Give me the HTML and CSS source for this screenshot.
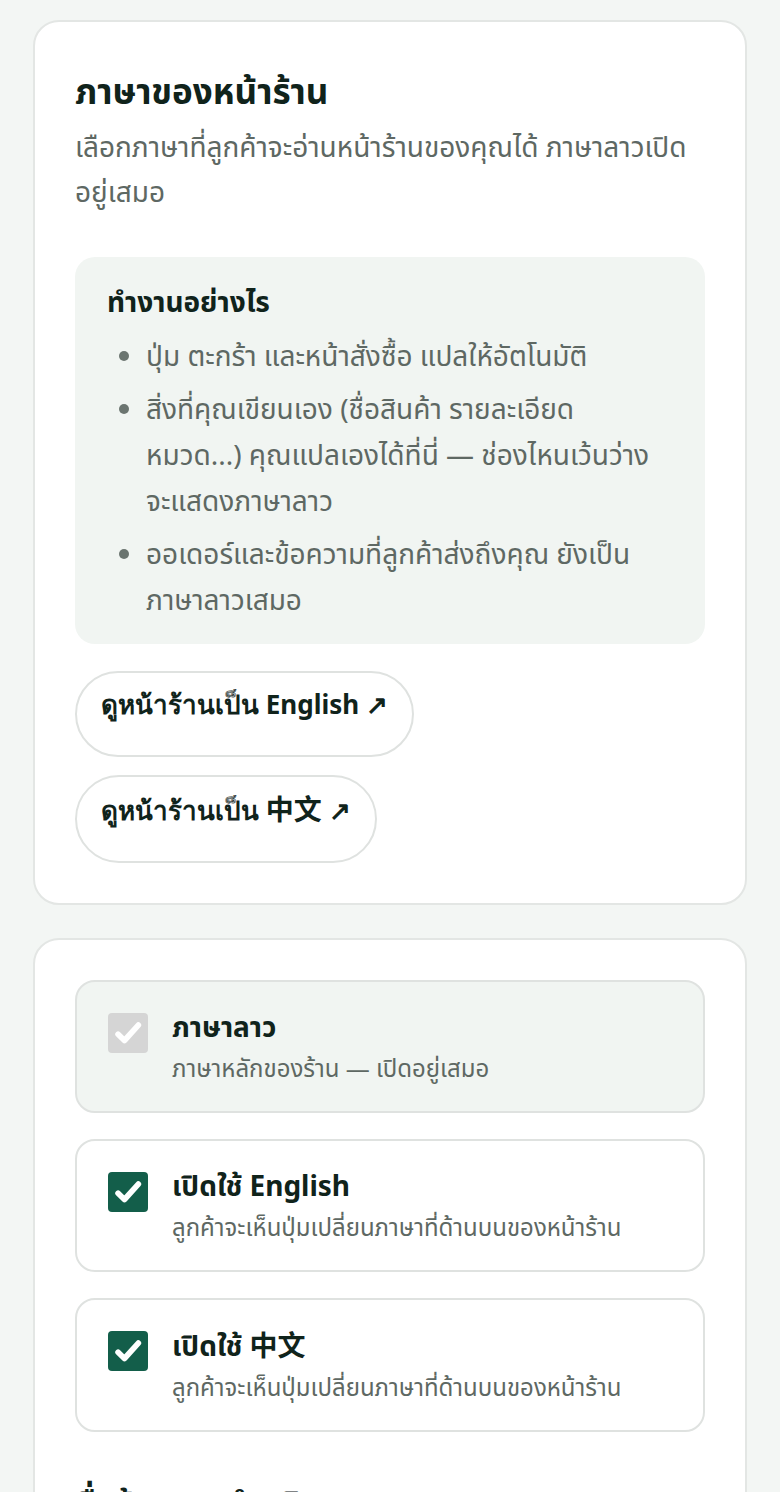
FILE: index.html
```html
<!DOCTYPE html>
<html lang="th">
<head>
<meta charset="utf-8">
<title>ภาษาของหน้าร้าน</title>
<link rel="stylesheet" href="styles.css">
</head>
<body>
<main class="page">
  <section class="card card-intro">
    <h1 class="card-title">ภาษาของหน้าร้าน</h1>
    <p class="card-desc">เลือกภาษาที่ลูกค้าจะอ่านหน้าร้านของคุณได้ ภาษาลาวเปิดอยู่เสมอ</p>
    <div class="info">
      <h2 class="info-title">ทำงานอย่างไร</h2>
      <ul class="info-list">
        <li>ปุ่ม ตะกร้า และหน้าสั่งซื้อ แปลให้อัตโนมัติ</li>
        <li>สิ่งที่คุณเขียนเอง (ชื่อสินค้า รายละเอียด หมวด...) คุณแปลเองได้ที่นี่ — ช่องไหนเว้นว่างจะแสดงภาษาลาว</li>
        <li>ออเดอร์และข้อความที่ลูกค้าส่งถึงคุณ ยังเป็นภาษาลาวเสมอ</li>
      </ul>
    </div>
    <div class="links">
      <a class="pill" href="#">ดูหน้าร้านเป็น English ↗</a>
      <a class="pill" href="#">ดูหน้าร้านเป็น <span class="cjk">中文</span> ↗</a>
    </div>
  </section>

  <section class="card card-options">
    <div class="options">
      <label class="option option-locked">
        <span class="check check-disabled">
          <svg viewBox="0 0 24 24" width="34" height="34"><path d="M5 12.8l4.5 4.5L19.3 6.4" fill="none" stroke="#fff" stroke-width="4" stroke-linecap="round" stroke-linejoin="round"/></svg>
        </span>
        <span class="option-text">
          <span class="option-title">ภาษาลาว</span>
          <span class="option-sub">ภาษาหลักของร้าน — เปิดอยู่เสมอ</span>
        </span>
      </label>
      <label class="option">
        <span class="check">
          <svg viewBox="0 0 24 24" width="34" height="34"><path d="M5 12.8l4.5 4.5L19.3 6.4" fill="none" stroke="#fff" stroke-width="4" stroke-linecap="round" stroke-linejoin="round"/></svg>
        </span>
        <span class="option-text">
          <span class="option-title">เปิดใช้ English</span>
          <span class="option-sub">ลูกค้าจะเห็นปุ่มเปลี่ยนภาษาที่ด้านบนของหน้าร้าน</span>
        </span>
      </label>
      <label class="option">
        <span class="check">
          <svg viewBox="0 0 24 24" width="34" height="34"><path d="M5 12.8l4.5 4.5L19.3 6.4" fill="none" stroke="#fff" stroke-width="4" stroke-linecap="round" stroke-linejoin="round"/></svg>
        </span>
        <span class="option-text">
          <span class="option-title">เปิดใช้ <span class="cjk">中文</span></span>
          <span class="option-sub">ลูกค้าจะเห็นปุ่มเปลี่ยนภาษาที่ด้านบนของหน้าร้าน</span>
        </span>
      </label>
    </div>
    <h2 class="section-title">ชื่อร้านและคำอธิบาย</h2>
  </section>
</main>
</body>
</html>
```
FILE: styles.css
```css
* { box-sizing: border-box; }
html, body { margin: 0; padding: 0; }
body {
  background: #f3f6f4;
  font-family: "Noto Sans", "Noto Sans Thai", "Noto Sans CJK SC", sans-serif;
  color: #10231b;
}
.page {
  padding: 20px 33px 40px;
  display: flex;
  flex-direction: column;
  gap: 33px;
}
.card {
  background: #fff;
  border: 2px solid #e3e6e4;
  border-radius: 26px;
  padding: 40px;
}
.card-intro { padding-top: 44px; }
.card-title {
  margin: 0;
  font-size: 35px;
  font-weight: 700;
  line-height: 50px;
  color: #10231b;
}
.card-desc {
  margin: 8px 0 0;
  font-size: 28px;
  line-height: 45px;
  color: #5e6863;
}
.info {
  margin-top: 43px;
  background: #f1f5f2;
  border-radius: 20px;
  padding: 24px 32px 22px;
}
.info-title {
  margin: 0;
  font-size: 28px;
  font-weight: 700;
  line-height: 40px;
  color: #10231b;
}
.info-list {
  margin: 11px 0 0;
  padding: 0 0 0 39px;
  font-size: 28px;
  line-height: 46px;
  color: #5e6863;
  display: flex;
  flex-direction: column;
  gap: 7px;
}
.info-list li::marker { color: #6b7570; }
.links {
  margin-top: 27px;
  display: flex;
  flex-direction: column;
  align-items: flex-start;
  gap: 18px;
}
.pill {
  display: inline-block;
  padding: 11px 24px 31px;
  border: 2px solid #dfe2e0;
  border-radius: 999px;
  font-family: "Noto Sans", sans-serif;
  font-size: 26px;
  font-weight: 700;
  line-height: 40px;
  color: #10231b;
  text-decoration: none;
  background: #fff;
}
.pill .cjk { font-size: 28px; }
.cjk { font-family: "Noto Sans CJK SC", sans-serif; font-weight: 700; }
.options {
  display: flex;
  flex-direction: column;
  gap: 26px;
}
.option {
  display: flex;
  align-items: flex-start;
  gap: 24px;
  border: 2px solid #dfe2e0;
  border-radius: 20px;
  padding: 31px 31px 26px;
  background: #fff;
}
.option-locked { background: #f1f5f2; }
.check {
  flex: none;
  width: 40px;
  height: 40px;
  border-radius: 4px;
  background: #135e4a;
  display: flex;
  align-items: center;
  justify-content: center;
}
.check-disabled { background: #d5d5d5; }
.option-text {
  display: flex;
  flex-direction: column;
}
.option-title {
  font-size: 28px;
  font-weight: 700;
  line-height: 26px;
  color: #10231b;
}
.option-sub {
  margin-top: 12px;
  font-size: 24px;
  line-height: 34px;
  color: #5e6863;
}
.section-title {
  margin: 46px 0 0;
  font-size: 34px;
  font-weight: 700;
  line-height: 50px;
}
```
